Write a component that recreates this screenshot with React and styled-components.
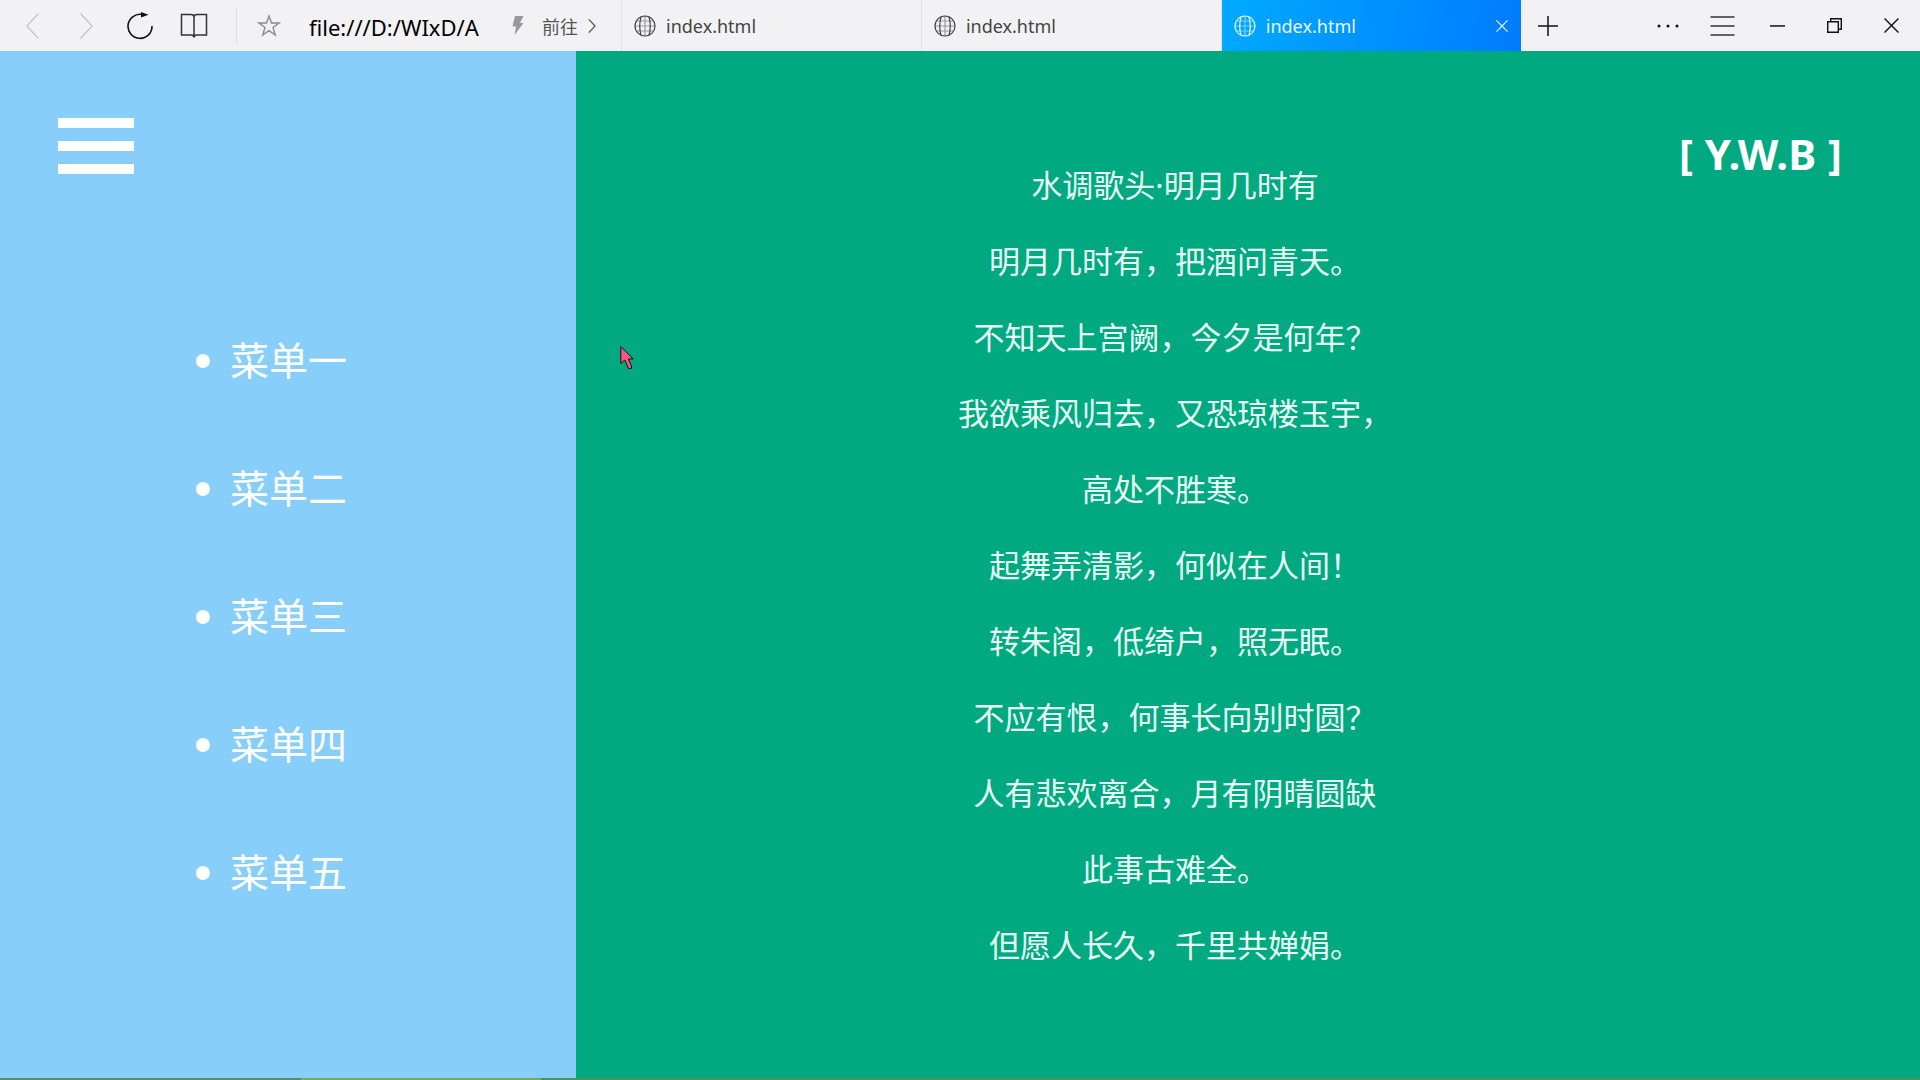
import styled, { createGlobalStyle } from 'styled-components'
// Global reset and page font
const GlobalStyle = createGlobalStyle`
*{
box-sizing:border-box;
}
body{
margin:0;
font-family:'Noto Sans','Noto Sans CJK SC',sans-serif;
}
button{
padding:0;
border:none;
background:none;
color:inherit;
font:inherit;
cursor:pointer;
}
svg{
display:block;
flex-shrink:0;
}
`
const Page = styled.div`
min-height:100vh;
display:flex;
flex-direction:column;
`

// Browser bar
const Bar = styled.header`
height:51px;
display:flex;
background-color:#f2f2f4;
color:#111;
`
const AddressArea = styled.div`
width:622px;
display:flex;
align-items:center;
border-right:1px solid #e2e2e5;
`
const IconButton = styled.button`
width:${props => props.$width || 54}px;
height:100%;
display:flex;
align-items:center;
justify-content:center;
flex-shrink:0;
color:${props => props.$color || '#111'};
`
const NavGroup = styled.nav`
height:100%;
display:flex;
padding:0 15px 0 5px;
`
const Divider = styled.div`
width:1px;
height:36px;
background-color:#dedee1;
`
const Address = styled.input`
flex:1;
min-width:0;
padding:2px 0 0 8px;
border:none;
outline:none;
background:none;
font-family:inherit;
font-size:22px;
color:#000;
`
const GoButton = styled.button`
height:100%;
display:flex;
align-items:center;
padding:0 25px 0 31px;
font-size:18px;
color:#555;
`
const GoLabel = styled.span`
padding:0 10px 0 18px;
`
const Tabs = styled.div`
display:flex;
flex:0 1 899px;
`
const TabBox = styled.div`
width:100%;
display:flex;
align-items:center;
padding:0 10px 0 12px;
border-right:${props => props.$active ? 'none' : '1px solid #e2e2e5'};
background:${props => props.$active ? 'linear-gradient(100deg, #00aaff, #007bff)' : 'none'};
color:${props => props.$active ? '#e9f8ff' : '#444'};
`
const TabButton = styled.button`
flex:1;
display:flex;
align-items:center;
gap:10px;
font-size:18px;
`
const WindowButtons = styled.div`
display:flex;
margin-left:auto;
padding-right:1px;
`

// Page parts
const Content = styled.div`
flex:1;
display:flex;
`
const SideBar = styled.aside`
width:30%;
padding:67px 58px;
background-color:#87cefa;
color:#fff;
`
const MenuToggle = styled.button`
width:76px;
display:flex;
flex-direction:column;
gap:13px;
`
const Line = styled.span`
width:100%;
height:10px;
background-color:#fff;
`
const Menu = styled.ul`
margin:123px 0 0;
padding:0 0 0 138px;
list-style:none;
`
const MenuItem = styled.li`
height:128px;
display:flex;
align-items:center;
gap:20px;
font-size:39px;
line-height:56px;
&::before{
    content:'';
    width:14px;
    height:14px;
    border-radius:50%;
    background-color:#fff;
}
`
const MenuLink = styled.a`
padding-bottom:2px;
color:inherit;
text-decoration:none;
`
const Main = styled.main`
flex:1;
display:flex;
align-items:flex-start;
padding:0 78px 0 382px;
background-color:#00a97f;
color:#fff;
`
const Poem = styled.article`
padding-top:96px;
text-align:center;
color:#e8fff6;
`
const Verse = styled.p`
margin:0;
font-size:31px;
line-height:76px;
white-space:nowrap;
`
const Title = styled(Verse).attrs({ as: 'h1' })`
font-weight:400;
`
const Logo = styled.div`
display:flex;
gap:12px;
margin:75px 0 0 auto;
font-size:42px;
font-weight:700;
line-height:56px;
white-space:nowrap;
`
const BottomEdge = styled.div`
height:2px;
background:linear-gradient(to right, #55905f 301px, #6fae5c 301px, #6fae5c 541px, #4b9257 541px);
`
const Pointer = styled.svg`
position:absolute;
left:620px;
top:345px;
`

// Globe drawn before each tab title
const Globe = () => (
    <svg width='22' height='22' viewBox='0 0 22 22' fill='none' stroke='currentColor' strokeWidth='1.2'>
        <circle cx='11' cy='11' r='10' />
        <path d='M7 1.800Q4.500 11 7 20.200M15 1.800Q17.500 11 15 20.200' />
        <path d='M11 1v20M1 11h20M3 6h16M3 16h16' strokeOpacity='0.5' />
    </svg>
)
const Chevron = ({ left, width, height, stroke }) => (
    <svg width={width} height={height} viewBox='0 0 13 26' fill='none' stroke='currentColor' strokeWidth={stroke}>
        <path d={left ? 'M12.500 .5L.8 13l11.700 12.500' : 'M.5.5L12.200 13L.5 25.500'} />
    </svg>
)
const Cross = ({ size }) => (
    <svg width={size} height={size} viewBox='0 0 14 14' fill='none' stroke='currentColor' strokeWidth='1.3'>
        <path d='M.5.5l13 13M13.500.5l-13 13' />
    </svg>
)

const Tab = ({ title, active }) => (
    <TabBox $active={active}>
        <TabButton>
            <Globe />
            {title}
        </TabButton>
        {active &&
            <IconButton $width={18} $color='#fff' aria-label='Close tab'>
                <Cross size={12} />
            </IconButton>
        }
    </TabBox>
)

const BrowserBar = () => (
    <Bar>
        <AddressArea>
            <NavGroup>
                <IconButton $color='#c4c4c6' aria-label='Back'>
                    <Chevron left width={13} height={26} stroke={1.3} />
                </IconButton>
                <IconButton $color='#c4c4c6' aria-label='Forward'>
                    <Chevron width={13} height={26} stroke={1.3} />
                </IconButton>
                <IconButton aria-label='Reload'>
                    <svg width='26' height='28' viewBox='0 0 26 28' fill='none' stroke='currentColor' strokeWidth='1.6'>
                        <path d='M25 14A12 12 0 1 1 15 2.500' />
                        <path d='M14 0L21.500 2.800L14 5.500z' fill='currentColor' stroke='none' />
                    </svg>
                </IconButton>
                <IconButton $color='#333' aria-label='Reading list'>
                    <svg width='28' height='26' viewBox='0 0 28 26' fill='none' stroke='currentColor' strokeWidth='1.5'>
                        <path d='M1.500 1.500H11Q14 1.500 14 4Q14 1.500 17 1.500H26.500V22H17Q14 22 14 24.500Q14 22 11 22H1.500zM14 4V24' />
                    </svg>
                </IconButton>
            </NavGroup>
            <Divider />
            <IconButton $width={64} $color='#8c8c8e' aria-label='Bookmark'>
                <svg width='24' height='23' viewBox='0 0 24 23' fill='none' stroke='currentColor' strokeWidth='1.4'>
                    <path d='M12 2l2.500 7H22l-6 4.500 2.300 7.500L12 16.600 5.700 21 8 13.500 2 9h7.500z' />
                </svg>
            </IconButton>
            <Address type='text' aria-label='Address' defaultValue='file:///D:/WIxD/A' />
            <GoButton>
                <svg width='12' height='19' viewBox='0 0 12 19' fill='#999'>
                    <path d='M3 0h8.500L8 7h3.500L2.500 19L4 10.500H.5z' />
                </svg>
                <GoLabel>前往</GoLabel>
                <Chevron width={8} height={14} stroke={2.2} />
            </GoButton>
        </AddressArea>
        <Tabs>
            <Tab title='index.html' />
            <Tab title='index.html' />
            <Tab title='index.html' active />
        </Tabs>
        <IconButton aria-label='New tab'>
            <svg width='20' height='20' viewBox='0 0 20 20' stroke='currentColor' strokeWidth='1.5'>
                <path d='M10 0v20M0 10h20' />
            </svg>
        </IconButton>
        <WindowButtons>
            <IconButton aria-label='More'>
                <svg width='22' height='4' viewBox='0 0 22 4' fill='currentColor'>
                    <circle cx='2' cy='2' r='1.500' />
                    <circle cx='11' cy='2' r='1.500' />
                    <circle cx='20' cy='2' r='1.500' />
                </svg>
            </IconButton>
            <IconButton aria-label='Menu'>
                <svg width='25' height='20' viewBox='0 0 25 20' stroke='#333' strokeWidth='1.4'>
                    <path d='M.5 1h24M.5 10h24M.5 19h24' />
                </svg>
            </IconButton>
            <IconButton $width={56} aria-label='Minimize'>
                <svg width='15' height='2' viewBox='0 0 15 2' fill='currentColor'>
                    <path d='M0 .2h15v1.500H0z' />
                </svg>
            </IconButton>
            <IconButton $width={58} aria-label='Restore'>
                <svg width='15' height='15' viewBox='0 0 15 15' fill='none' stroke='currentColor' strokeWidth='1.4'>
                    <path d='M.7 3.700h10.600v10.600H.7zM3.700 3.700V.7h10.600v10.600h-3' />
                </svg>
            </IconButton>
            <IconButton $width={56} aria-label='Close window'>
                <Cross size={15} />
            </IconButton>
        </WindowButtons>
    </Bar>
)

const menuItems = ['菜单一', '菜单二', '菜单三', '菜单四', '菜单五']
const verses = [
    '明月几时有，把酒问青天。',
    '不知天上宫阙，今夕是何年？',
    '我欲乘风归去，又恐琼楼玉宇，',
    '高处不胜寒。',
    '起舞弄清影，何似在人间！',
    '转朱阁，低绮户，照无眠。',
    '不应有恨，何事长向别时圆？',
    '人有悲欢离合，月有阴晴圆缺',
    '此事古难全。',
    '但愿人长久，千里共婵娟。'
]

const App = () => {
    // Browser bar, side menu and poem
    return (
        <Page lang='zh-CN'>
            <GlobalStyle />
            <BrowserBar />
            <Content>
                <SideBar>
                    <MenuToggle aria-label='菜单'>
                        <Line />
                        <Line />
                        <Line />
                    </MenuToggle>
                    <Menu>
                        {menuItems.map(item => (
                            <MenuItem key={item}><MenuLink href='#'>{item}</MenuLink></MenuItem>
                        ))}
                    </Menu>
                </SideBar>
                <Main>
                    <Poem>
                        <Title>水调歌头·明月几时有</Title>
                        {verses.map(verse => <Verse key={verse}>{verse}</Verse>)}
                    </Poem>
                    <Logo>
                        <span>[</span>
                        <span>Y.W.B</span>
                        <span>]</span>
                    </Logo>
                </Main>
            </Content>
            <BottomEdge />
            <Pointer width='14' height='25' viewBox='0 0 14 25' fill='#ff5580' stroke='#111' strokeWidth='1'>
                <path d='M.8 1.500V18.500L4.800 15L8.500 23.500H11.500V21L8.300 14H13.200z' />
            </Pointer>
        </Page>
    )
}

export default App
